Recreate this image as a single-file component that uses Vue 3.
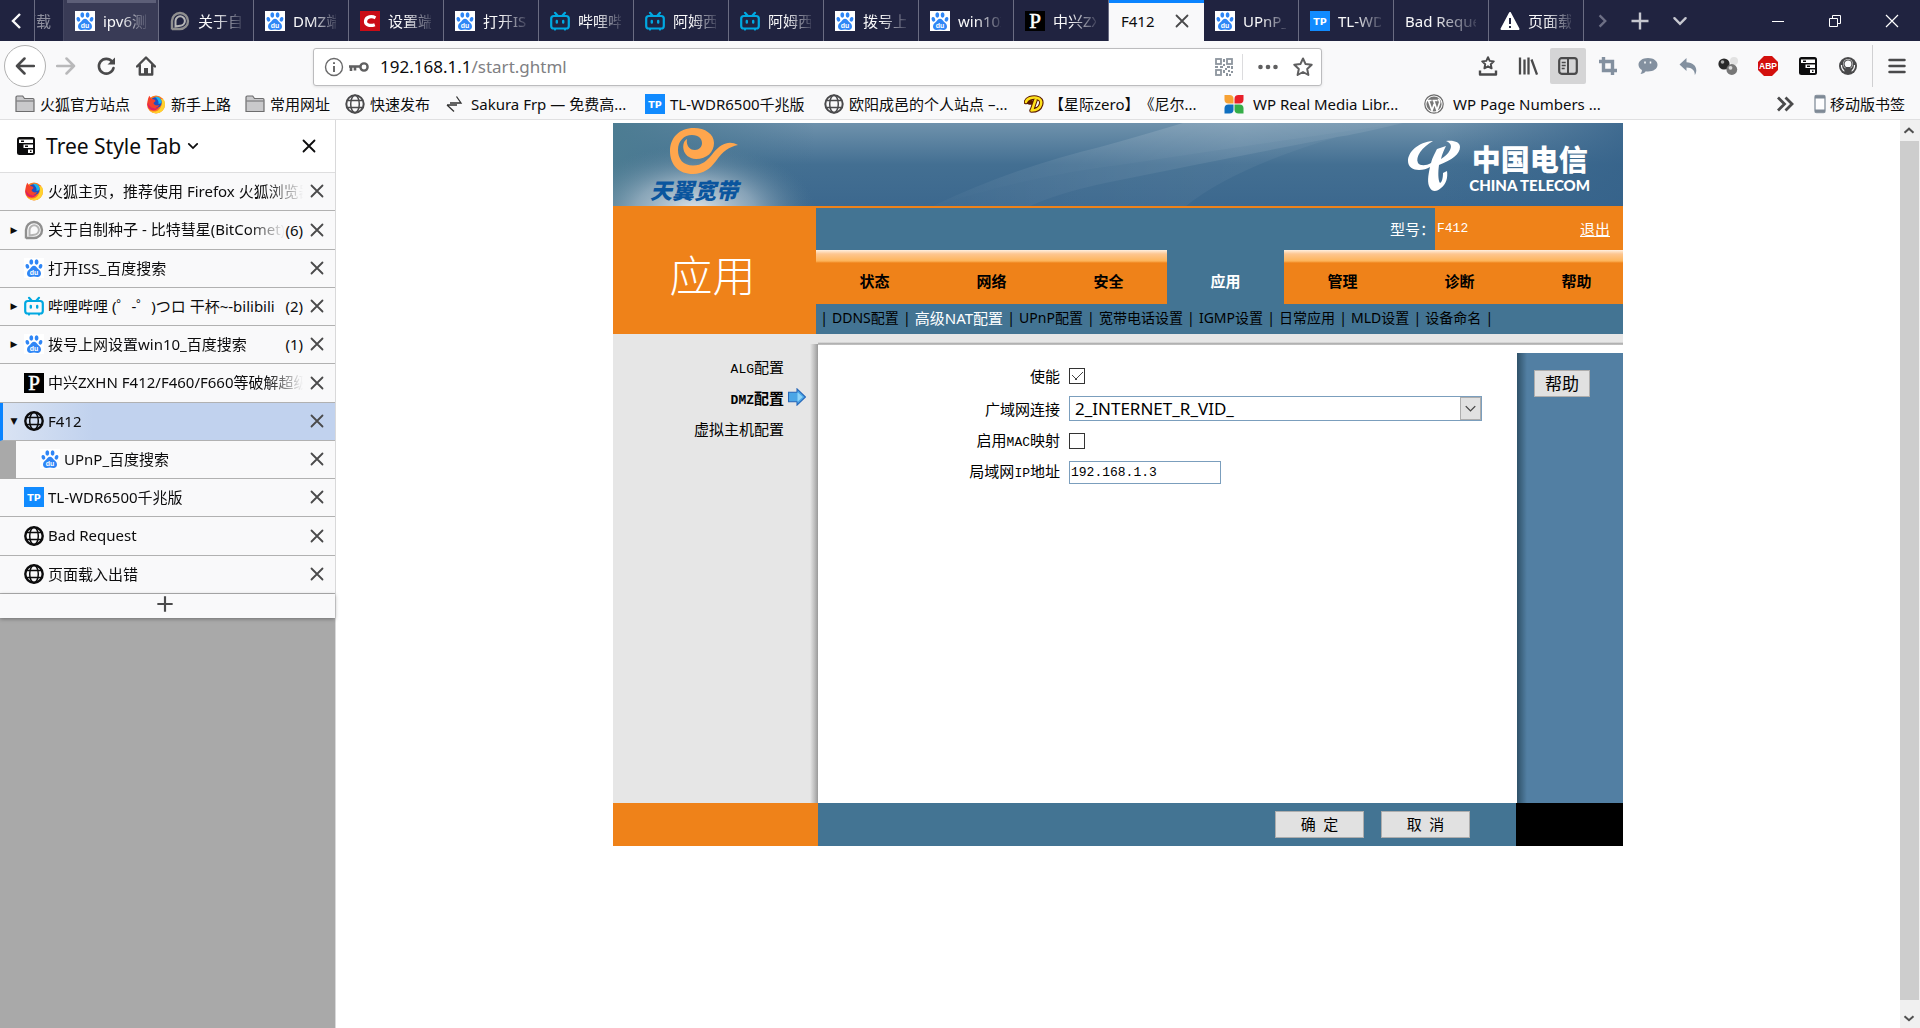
<script setup>
import { ref } from 'vue'

const tabs = [
  { icon: 'baidu', label: 'ipv6测试', hover: true },
  { icon: 'comet', label: '关于自制' },
  { icon: 'baidu', label: 'DMZ端口' },
  { icon: 'csdn', label: '设置端口' },
  { icon: 'baidu', label: '打开ISS' },
  { icon: 'bili', label: '哔哩哔哩' },
  { icon: 'bili', label: '阿姆西特' },
  { icon: 'bili', label: '阿姆西特' },
  { icon: 'baidu', label: '拨号上网' },
  { icon: 'baidu', label: 'win10端' },
  { icon: 'pblog', label: '中兴ZXHN' },
  { label: 'F412', active: true },
  { icon: 'baidu', label: 'UPnP_百' },
  { icon: 'tplink', label: 'TL-WDR' },
  { label: 'Bad Request' },
  { icon: 'warn', label: '页面载入' },
]

const bookmarks = [
  { icon: 'folder', label: '火狐官方站点', width: 131 },
  { icon: 'firefox', label: '新手上路', width: 99 },
  { icon: 'folder', label: '常用网址', width: 100 },
  { icon: 'globe', label: '快速发布', width: 101 },
  { icon: 'sakura', label: 'Sakura Frp — 免费高...', width: 199 },
  { icon: 'tplink', label: 'TL-WDR6500千兆版', width: 179 },
  { icon: 'globe', label: '欧阳成邑的个人站点 –...', width: 200 },
  { icon: 'dee', label: '【星际zero】《尼尔...', width: 200 },
  { icon: 'petals', label: 'WP Real Media Libr...', width: 200, wide: true },
  { icon: 'wp', label: 'WP Page Numbers ...', width: 200, wide: true },
]

const tools = [
  { icon: 'saved', name: '书签收藏' },
  { icon: 'library', name: '我的足迹' },
  { icon: 'sidebar', name: '侧栏', on: true },
  { icon: 'crop', name: '截图' },
  { icon: 'chat', name: '对话' },
  { icon: 'undo', name: '撤销关闭' },
  { icon: 'balls', name: '扩展' },
  { icon: 'abp', name: 'Adblock Plus' },
  { icon: 'tst', name: 'Tree Style Tab' },
  { icon: 'account', name: '账户' },
]

const tree = [
  { icon: 'firefox', label: '火狐主页，推荐使用 Firefox 火狐浏览器' },
  { icon: 'comet', label: '关于自制种子 - 比特彗星(BitComet)', count: 6, twisty: '▶' },
  { icon: 'baidu', label: '打开ISS_百度搜索' },
  { icon: 'bili', label: '哔哩哔哩 (゜-゜)つロ 干杯~-bilibili', count: 2, twisty: '▶', full: true },
  { icon: 'baidu', label: '拨号上网设置win10_百度搜索', count: 1, twisty: '▶' },
  { icon: 'pblog', label: '中兴ZXHN F412/F460/F660等破解超级' },
  { icon: 'globedark', label: 'F412', twisty: '▼', active: true },
  { icon: 'baidu', label: 'UPnP_百度搜索', child: true },
  { icon: 'tplink', label: 'TL-WDR6500千兆版' },
  { icon: 'globedark', label: 'Bad Request' },
  { icon: 'globedark', label: '页面载入出错' },
]

const menu = ['状态', '网络', '安全', '应用', '管理', '诊断', '帮助']
const submenu = ['DDNS配置', '高级NAT配置', 'UPnP配置', '宽带电话设置', 'IGMP设置', '日常应用', 'MLD设置', '设备命名']

const enabled = ref(true)
const macMap = ref(false)
const wan = ref('2_INTERNET_R_VID_')
const lanIp = ref('192.168.1.3')
</script>

<template>
  <div class="browser">
    <svg class="sprite" aria-hidden="true">
      <symbol id="baidu" viewBox="0 0 20 20">
        <rect width="20" height="20" fill="#fff" />
        <g fill="#2f86f6">
          <ellipse cx="7.3" cy="4" rx="1.9" ry="2.7" />
          <ellipse cx="12.6" cy="4" rx="1.9" ry="2.7" />
          <ellipse cx="3.4" cy="8.3" rx="1.8" ry="2.4" transform="rotate(-20 3.4 8.3)" />
          <ellipse cx="16.5" cy="8.3" rx="1.8" ry="2.4" transform="rotate(20 16.5 8.3)" />
          <path d="M10 7.8c2 0 2.600 1.600 3.700 2.800 1.300 1.400 3.300 2.300 3.300 4.800 0 2.200-1.500 3.500-3.400 3.500-1.300 0-2.300-.4-3.600-.4s-2.300.4-3.600.4C4.500 18.900 3 17.600 3 15.400c0-2.500 2-3.400 3.300-4.800C7.400 9.400 8 7.800 10 7.800z" />
        </g>
        <text x="10" y="17.300" font-size="7" font-weight="700" font-family="Liberation Sans, sans-serif" text-anchor="middle" fill="#fff">du</text>
      </symbol>
      <symbol id="comet" viewBox="0 0 20 20">
        <path d="M2 18.500V10a8 8 0 1 1 8 8H2z" fill="none" stroke="#8f8f8f" stroke-width="2.400" />
        <path d="M5.500 15.500V10a4.700 4.700 0 1 1 4.600 4.700L5.500 15.500z" fill="none" stroke="#b5b5b5" stroke-width="2" />
      </symbol>
      <symbol id="csdn" viewBox="0 0 20 20">
        <rect width="20" height="20" fill="#ca0c16" />
        <path d="M15.500 6.800C12 5 6.200 5.200 5.500 10c-.4 4.600 5.200 5.200 9.300 3.700" fill="none" stroke="#fff" stroke-width="3.200" />
      </symbol>
      <symbol id="bili" viewBox="0 0 20 20">
        <g fill="none" stroke="#00a8e1" stroke-width="2.200" stroke-linecap="round">
          <rect x="1.200" y="5" width="17.600" height="12.500" rx="2.600" />
          <path d="M5 1.800 7.500 4.600M15 1.800 12.500 4.600M5 18.200v.4M15 18.200v.4" />
          <path d="M6.800 10v1.600M13.200 10v1.600" stroke-width="2.400" />
        </g>
      </symbol>
      <symbol id="pblog" viewBox="0 0 20 20">
        <rect width="20" height="20" fill="#000" />
        <text x="10" y="17" font-size="21" font-family="Liberation Serif, serif" text-anchor="middle" fill="#fff" stroke="#fff" stroke-width=".5">P</text>
      </symbol>
      <symbol id="tplink" viewBox="0 0 20 20">
        <rect width="20" height="20" fill="#118bff" />
        <text x="10" y="13.500" font-size="9.500" font-weight="700" font-family="DejaVu Sans, sans-serif" text-anchor="middle" fill="#fff">TP</text>
      </symbol>
      <symbol id="warn" viewBox="0 0 20 20">
        <path d="M10 2 18.500 18h-17z" fill="#fff" stroke="#fff" stroke-width="2" stroke-linejoin="round" />
        <path d="M10 7v6M10 15v2" stroke="#202340" stroke-width="2" />
      </symbol>
      <symbol id="folder" viewBox="0 0 20 20">
        <path d="M1 17.500V3.500C1 2.700 1.500 2 2.300 2h5.400L9.500 4.500h8.300c.7 0 1.200.5 1.200 1.200v11.800z" fill="#c9c9cb" stroke="#6d6d6e" stroke-width="1.200" />
        <path d="M1.500 7h17" stroke="#6d6d6e" />
      </symbol>
      <symbol id="firefox" viewBox="0 0 20 20">
        <circle cx="10" cy="10.500" r="9" fill="#ff7a1a" />
        <path d="M18 6c2 4 1 9.500-3 12-4 2.300-9 1.500-12-2 3 2 7 2 9.500 0S17 10 15 5c1.200.2 2.200.4 3 1z" fill="#ffd22e" />
        <circle cx="10" cy="8.500" r="5.600" fill="#1f4fc0" />
        <path d="M9 3c4-1 7 2 6.500 6l-3 1C13 7 11.500 5 9 3z" fill="#16b5ee" />
        <path d="M2 5 3.200 1.800 5.600 5c2-.4 3.400.6 4 2L7.500 9c.5 2 3 3 5.500 2-1 4-8 4.500-10.500 0C1.500 9 1.500 7 2 5z" fill="#f5422c" />
        <path d="M2 8c.5 5 6 8 11 5-2 5-11 5-11.700-3z" fill="#e0205c" />
      </symbol>
      <symbol id="globe" viewBox="0 0 20 20">
        <g fill="none" stroke="#4a4a4c" stroke-width="1.500"><circle cx="10" cy="10" r="8.700" stroke-width="2" /><ellipse cx="10" cy="10" rx="4.300" ry="8.700" /><path d="M2.500 6.500h15M2.500 13.500h15" /></g>
      </symbol>
      <symbol id="globedark" viewBox="0 0 20 20">
        <g fill="none" stroke="#0c0c0d" stroke-width="1.500"><circle cx="10" cy="10" r="8.700" stroke-width="2.400" /><ellipse cx="10" cy="10" rx="4.300" ry="8.700" /><path d="M2.500 6.500h15M2.500 13.500h15" /></g>
      </symbol>
      <symbol id="sakura" viewBox="0 0 20 20">
        <path d="M10.500 2.500 15 9H4M1 11h10M1 11 8 17.500" fill="none" stroke="#333" stroke-width="1.300" />
      </symbol>
      <symbol id="dee" viewBox="0 0 20 20">
        <g fill="none" stroke-linecap="round" stroke-linejoin="round">
          <path d="M2 8c1-3.500 6-5 10.500-4.300 4 .7 5.500 3.300 4.500 6.800-1 3.500-4.500 6-9.500 6M11.500 6 8 16M5.500 8.500h5" stroke="#5a1a00" stroke-width="4.600" />
          <path d="M2 8c1-3.500 6-5 10.500-4.300 4 .7 5.500 3.300 4.500 6.800-1 3.500-4.500 6-9.500 6M11.500 6 8 16" stroke="#ffe21a" stroke-width="2.500" />
        </g>
      </symbol>
      <symbol id="petals" viewBox="0 0 20 20">
        <path d="M.5 1h5A4 4 0 0 1 9.500 5v4.500h-5A4 4 0 0 1 .5 5.500z" fill="#f7a234" />
        <path d="M19.500 1h-5a4 4 0 0 0-4 4v4.500h5a4 4 0 0 0 4-4z" fill="#e8202a" />
        <path d="M.5 19.500h5a4 4 0 0 0 4-4v-5h-5a4 4 0 0 0-4 4z" fill="#0f6fc0" />
        <path d="M19.500 19.500h-5a4 4 0 0 1-4-4v-5h5a4 4 0 0 1 4 4z" fill="#35ae48" />
      </symbol>
      <symbol id="wp" viewBox="0 0 20 20">
        <circle cx="10" cy="10" r="9.200" fill="#fff" stroke="#6b6b6b" stroke-width="1.200" />
        <circle cx="10" cy="10" r="7.600" fill="#777" />
        <path d="M2.600 6.500h5M8.500 6.500h5M4.500 6.500l3.500 10 2.200-6.500M9.700 6.500 13 16.500l2.600-7.800c.4-1.700-1.100-2.700-1-4" fill="none" stroke="#fff" stroke-width="1.700" />
      </symbol>
      <symbol id="back" viewBox="0 0 20 20"><path d="M19 10H2M9.500 2.500 2 10l7.500 7.500" fill="none" stroke="#4a4a4b" stroke-width="2.500" stroke-linecap="round" stroke-linejoin="round" /></symbol>
      <symbol id="forward" viewBox="0 0 20 20"><path d="M1 10h17M10.500 2.500 18 10l-7.500 7.500" fill="none" stroke="#b9b9ba" stroke-width="2.500" stroke-linecap="round" stroke-linejoin="round" /></symbol>
      <symbol id="reload" viewBox="0 0 20 20"><path d="M16 5.500A7.400 7.400 0 1 0 17.500 12" fill="none" stroke="#4a4a4b" stroke-width="2.600" stroke-linecap="round" /><path d="M19 1.500V8.600H11.500z" fill="#4a4a4b" /></symbol>
      <symbol id="home" viewBox="0 0 20 20"><path d="M1 10.500 10 1.500l9 9M3.800 9v9.500h12.400V9" fill="none" stroke="#4a4a4b" stroke-width="2.400" stroke-linecap="round" stroke-linejoin="round" /><path d="M8 18v-6h4v6z" fill="#4a4a4b" /></symbol>
      <symbol id="info" viewBox="0 0 20 20"><circle cx="10" cy="10" r="8.500" fill="none" stroke="#6a6a6b" stroke-width="1.400" /><path d="M10 9v6M10 5.200v1.900" stroke="#6a6a6b" stroke-width="2" /></symbol>
      <symbol id="key" viewBox="0 0 20 20"><circle cx="15" cy="10" r="3.600" fill="none" stroke="#5f5f60" stroke-width="2.400" /><path d="M0 9.500h11M2 10v4M6 10v3.500" stroke="#5f5f60" stroke-width="2.600" /></symbol>
      <symbol id="qr" viewBox="0 0 20 20">
        <g fill="none" stroke="#8d959e" stroke-width="1.800"><rect x="2" y="2" width="5" height="5" /><rect x="13" y="2" width="5" height="5" /><rect x="2" y="13" width="5" height="5" /></g>
        <path d="M9 2h2v3H9zM9 7h2v2H9zM1 9h3v2H1zM6 9h3v2H6zM11 11h2v2h-2zM9 13h2v3H9zM13 9h3v2h-3zM17 9h2v3h-2zM14 13h2v2h-2zM17 14h2v2h-2zM12 16h2v3h-2zM15 17h2v2h-2z" fill="#8d959e" />
      </symbol>
      <symbol id="dots" viewBox="0 0 20 20"><g fill="#5f5f60"><circle cx="2.500" cy="10" r="2.300" /><circle cx="10" cy="10" r="2.300" /><circle cx="17.500" cy="10" r="2.300" /></g></symbol>
      <symbol id="star" viewBox="0 0 20 20"><path d="M10 1.500l2.600 5.600 6.100.7-4.500 4.200 1.200 6L10 15l-5.400 3 1.200-6L1.300 7.800l6.100-.7z" fill="none" stroke="#5f5f60" stroke-width="2" stroke-linejoin="round" /></symbol>
      <symbol id="saved" viewBox="0 0 20 20"><path d="M10 1.200l1.700 3.700 4.100.5-3 2.800.8 4.100L10 10.300l-3.600 2 .8-4.100-3-2.800 4.100-.5z" fill="none" stroke="#4a4a4b" stroke-width="1.900" stroke-linejoin="round" /><path d="M2 14.500v4h16v-4" fill="none" stroke="#4a4a4b" stroke-width="2.400" stroke-linejoin="round" /></symbol>
      <symbol id="library" viewBox="0 0 20 20"><path d="M2 1.500v17M6.500 3.500v15M10.500 1.500v17M13.500 3.500 19 18.500" fill="none" stroke="#4a4a4b" stroke-width="2.300" /></symbol>
      <symbol id="sidebar" viewBox="0 0 20 20"><rect x="1.200" y="2.200" width="17.600" height="15.600" rx="2.500" fill="none" stroke="#4a4a4b" stroke-width="2.200" /><path d="M10 2v16" stroke="#4a4a4b" stroke-width="2" /><path d="M3.700 6.500h4M3.700 9.500h4M3.700 12.500h3" stroke="#4a4a4b" stroke-width="1.300" /></symbol>
      <symbol id="crop" viewBox="0 0 20 20"><path d="M5.500 1v13.500H19M1 5.500h13.500V19" fill="none" stroke="#83909f" stroke-width="3.400" /></symbol>
      <symbol id="chat" viewBox="0 0 20 20"><path d="M10 2c5.500 0 9.500 2.800 9.500 6.800S15.500 15.500 10 15.500c-.8 0-1.500 0-2.200-.2C6.500 17 4.500 18 2.500 18c1-1.200 1.500-2.500 1.400-4C1.800 12.700.5 11 .5 8.800.5 4.800 4.500 2 10 2z" fill="#83909f" /><path d="M7 5.500v2M12.500 5.500v2" stroke="#fff" stroke-width="1.500" /></symbol>
      <symbol id="undo" viewBox="0 0 20 20"><path d="M1.500 8.500 8.500 2v4.200c6 .3 9.800 3.500 9.800 8 0 1.800-.5 3.300-1.500 4.800.2-4.500-2.600-7.300-8.300-7.500V15z" fill="#83909f" /></symbol>
      <symbol id="balls" viewBox="0 0 20 20"><circle cx="16" cy="5" r="4" fill="#e2e2e2" /><circle cx="6" cy="8" r="5.600" fill="#2a2a2a" /><circle cx="4.500" cy="6" r="1.800" fill="#aaa" /><circle cx="13.800" cy="13.500" r="5.400" fill="#777" /><circle cx="12.500" cy="11.800" r="1.900" fill="#ddd" /></symbol>
      <symbol id="abp" viewBox="0 0 20 20"><path d="M6 0h8l6 6v8l-6 6H6l-6-6V6z" fill="#d3100d" /><text x="10" y="13.400" font-size="8.500" font-weight="700" font-family="Liberation Sans, sans-serif" text-anchor="middle" fill="#fff">ABP</text></symbol>
      <symbol id="tst" viewBox="0 0 20 20"><rect x="1" y="1" width="18" height="18" rx="2.500" fill="#0c0c0d" /><path d="M3 3.500h14v3.500H3zM7.500 8.500H17V12H7.500zM12 13.500h5V17h-5z" fill="#fff" /><path d="M5 5.300h3M9 10.300h3M14 15.300h1.500" stroke="#0c0c0d" stroke-width="1.400" /></symbol>
      <symbol id="account" viewBox="0 0 20 20"><circle cx="10" cy="10" r="9" fill="#4a4a4b" /><circle cx="10" cy="8" r="5" fill="#f9f9fa" /><path d="M3.500 9a7 7 0 0 0 3.500 6.500" fill="none" stroke="#f9f9fa" stroke-width="1.200" /><path d="M16.500 9a7 7 0 0 1-3.500 6.500" fill="none" stroke="#f9f9fa" stroke-width="1.200" /><path d="M8 11h4v2.500l2.500 1.500-4.500 3-4.500-3L8 13.500z" fill="#4a4a4b" /><circle cx="10" cy="8" r="4" fill="none" stroke="#4a4a4b" stroke-width="1.200" /></symbol>
      <symbol id="burger" viewBox="0 0 20 20"><path d="M2.500 4h15M2.500 10h15M2.500 16h15" stroke="#4a4a4b" stroke-width="2.500" stroke-linecap="round" /></symbol>
      <symbol id="more" viewBox="0 0 20 20"><path d="M3 3.500 9.500 10 3 16.500M10.500 3.500 17 10l-6.500 6.500" fill="none" stroke="#4a4a4b" stroke-width="2.800" /></symbol>
      <symbol id="phone" viewBox="0 0 20 20"><rect x="5" y="1.500" width="10" height="17" rx="1.500" fill="#fdfdfe" stroke="#9aa3ad" stroke-width="1.600" /><path d="M5 3h10M5 17h10" stroke="#7f8a96" stroke-width="3" /></symbol>
      <symbol id="close" viewBox="0 0 20 20"><path d="M4.500 4.500l11 11M15.500 4.500l-11 11" fill="none" stroke="currentColor" stroke-width="1.800" stroke-linecap="round" /></symbol>
      <symbol id="left" viewBox="0 0 20 20"><path d="M13 3 6 10l7 7" fill="none" stroke="currentColor" stroke-width="2.400" /></symbol>
      <symbol id="right" viewBox="0 0 20 20"><path d="M7 3l7 7-7 7" fill="none" stroke="currentColor" stroke-width="3" /></symbol>
      <symbol id="down" viewBox="0 0 20 20"><path d="M3 6.500l7 7 7-7" fill="none" stroke="currentColor" stroke-width="3" stroke-linecap="round" /></symbol>
      <symbol id="plus" viewBox="0 0 20 20"><path d="M10 1.500v17M1.500 10h17" stroke="currentColor" stroke-width="2.400" /></symbol>
      <symbol id="minimize" viewBox="0 0 20 20"><path d="M4 10.500h12" stroke="#fff" stroke-width="1" /></symbol>
      <symbol id="restore" viewBox="0 0 20 20"><path d="M4.500 7.500h8v8h-8zM7.500 7.500v-3h8v8h-3" fill="none" stroke="#fff" stroke-width="1" /></symbol>
      <symbol id="exit" viewBox="0 0 20 20"><path d="M4 4l12 12M16 4 4 16" stroke="#fff" stroke-width="1.200" /></symbol>
    </svg>

    <header class="chrome">
      <div class="tabbar">
        <button class="scroll" aria-label="向左滚动"><svg class="ic"><use href="#left" /></svg></button>
        <button class="tab cut"><span class="tab-text">面载</span></button>
        <button v-for="(t, i) in tabs" :key="i" class="tab" :class="{ active: t.active, hover: t.hover }">
          <svg v-if="t.icon" class="ic"><use :href="'#' + t.icon" /></svg>
          <span class="tab-text">{{ t.label }}</span>
          <svg v-if="t.active" class="ic"><use href="#close" /></svg>
        </button>
        <button class="strip-btn dim" aria-label="向右滚动"><svg class="ic small"><use href="#right" /></svg></button>
        <button class="strip-btn" aria-label="新建标签页"><svg class="ic"><use href="#plus" /></svg></button>
        <button class="strip-btn" aria-label="列出标签页"><svg class="ic small"><use href="#down" /></svg></button>
        <div class="window">
          <button aria-label="最小化"><svg class="ic"><use href="#minimize" /></svg></button>
          <button aria-label="还原"><svg class="ic"><use href="#restore" /></svg></button>
          <button aria-label="关闭"><svg class="ic"><use href="#exit" /></svg></button>
        </div>
      </div>

      <div class="navbar">
        <div class="nav-left">
          <button class="round" aria-label="后退"><svg class="ic"><use href="#back" /></svg></button>
          <button aria-label="前进"><svg class="ic"><use href="#forward" /></svg></button>
          <button aria-label="刷新"><svg class="ic"><use href="#reload" /></svg></button>
          <button aria-label="主页"><svg class="ic"><use href="#home" /></svg></button>
        </div>
        <div class="urlbar">
          <svg class="ic"><use href="#info" /></svg>
          <svg class="ic key"><use href="#key" /></svg>
          <div class="url">192.168.1.1<span>/start.ghtml</span></div>
          <svg class="ic"><use href="#qr" /></svg>
          <i class="rule"></i>
          <svg class="ic"><use href="#dots" /></svg>
          <svg class="ic star"><use href="#star" /></svg>
        </div>
        <div class="tools">
          <button v-for="t in tools" :key="t.icon" :class="{ on: t.on }" :aria-label="t.name"><svg class="ic"><use :href="'#' + t.icon" /></svg></button>
        </div>
        <button class="burger" aria-label="菜单"><svg class="ic"><use href="#burger" /></svg></button>
      </div>

      <nav class="bookmarks">
        <a v-for="b in bookmarks" :key="b.label" href="#" :class="{ wide: b.wide }" :style="{ width: b.width + 'px' }">
          <svg class="ic"><use :href="'#' + b.icon" /></svg><span>{{ b.label }}</span>
        </a>
        <button class="overflow" aria-label="更多书签"><svg class="ic"><use href="#more" /></svg></button>
        <a href="#" class="mobile"><svg class="ic"><use href="#phone" /></svg><span>移动版书签</span></a>
      </nav>
    </header>

    <div class="body">
      <aside class="sidebar">
        <div class="side-head">
          <svg class="ic"><use href="#tst" /></svg>
          <h2>Tree Style Tab</h2>
          <svg class="ic tiny"><use href="#down" /></svg>
          <button aria-label="关闭侧栏"><svg class="ic"><use href="#close" /></svg></button>
        </div>
        <ul class="tree">
          <li v-for="t in tree" :key="t.label" :class="{ active: t.active, child: t.child }">
            <div class="row">
              <span class="twisty">{{ t.twisty }}</span>
              <svg class="ic"><use :href="'#' + t.icon" /></svg>
              <span class="row-text" :class="{ full: t.full }">{{ t.label }}</span>
              <span v-if="t.count" class="count">({{ t.count }})</span>
              <button aria-label="关闭标签页"><svg class="ic"><use href="#close" /></svg></button>
            </div>
          </li>
        </ul>
        <button class="add" aria-label="新建标签页"><svg class="ic"><use href="#plus" /></svg></button>
      </aside>

      <main class="view">
        <div class="router">
          <div class="banner">
            <svg class="banner-bg" viewBox="0 0 1010 83" preserveAspectRatio="none" aria-hidden="true">
              <defs>
                <linearGradient id="bg" x1="0" y1="0" x2="0" y2="1">
                  <stop offset="0" stop-color="#6f92ac" /><stop offset=".5" stop-color="#436f92" /><stop offset="1" stop-color="#3c688e" />
                </linearGradient>
                <linearGradient id="edge" x1="0" y1="0" x2="1" y2="0">
                  <stop offset="0" stop-color="#4c7c92" /><stop offset=".2" stop-color="#41708f" stop-opacity="0" /><stop offset=".82" stop-color="#35628a" stop-opacity="0" /><stop offset="1" stop-color="#35628a" stop-opacity=".8" />
                </linearGradient>
                <radialGradient id="glow" gradientUnits="userSpaceOnUse" cx="0" cy="0" r="1" gradientTransform="translate(82 88) scale(120 66)">
                  <stop offset="0" stop-color="#e2e8ed" /><stop offset=".5" stop-color="#a3b8c8" stop-opacity=".7" /><stop offset="1" stop-color="#5a8099" stop-opacity="0" />
                </radialGradient>
                <linearGradient id="ray" gradientUnits="userSpaceOnUse" x1="320" y1="83" x2="760" y2="0">
                  <stop offset="0" stop-color="#fff" stop-opacity=".02" /><stop offset=".7" stop-color="#fff" stop-opacity=".16" /><stop offset="1" stop-color="#fff" stop-opacity=".1" />
                </linearGradient>
              </defs>
              <rect width="1010" height="83" fill="url(#bg)" />
              <rect width="1010" height="83" fill="url(#edge)" />
              <path d="M320 83Q420 52 507 42 640 22 790 0H570Q520 15 487 24 400 45 320 83z" fill="url(#ray)" />
              <path d="M320 83Q420 52 507 42 640 22 790 0 740 12 724 14 600 38 507 57 450 68 417 83z" fill="url(#ray)" opacity=".8" />
              <path d="M573 83Q620 45 724 14 600 38 507 57 450 68 417 83z" fill="url(#ray)" opacity=".3" />
              <rect width="230" height="83" fill="url(#glow)" />
            </svg>
            <div class="brand">
              <svg class="swirl" viewBox="0 0 70 48" aria-hidden="true">
                <path d="M69 18C60 13 52 17 45 25 38 34 33 38.500 24 38.500 14 38.500 9 32 9 23 9 14 15 8 23 8c7 0 10 4 10 8s-3 7-7 7c-6 0-9-5-8-11-6 3-6 19 9 20 11 0 18-7 18-16S36 1 25 1C10 1 1 11 1 24c0 14 9 23 23 23 10 0 17-5 23-13 7-10 13-14 22-16z" fill="#ffa64d" />
              </svg>
              <strong>天翼宽带</strong>
            </div>
            <div class="telecom">
              <svg viewBox="0 0 52 52" aria-hidden="true">
                <path d="M25 1C10 2 0 12 0 21c0 6 5 9 11 9 4 0 8-1 11-3-2 9-3 16 0 21 2 4 7 4 11 0 5-4 7-10 6-17l-4 2c0 5-1 9-3 10-2-3-2-11-1-18C44 20 52 14 52 7c0-5-6-7-14-6 5 2 6 5 4 9-2 4-5 6-9 9 1-5 3-9 5-13l-9 3c-2 4-5 9-6 14-5 3-11 3-13 0-3-6 4-16 15-22z" fill="#fff" />
              </svg>
              <div class="telecom-text"><strong>中国电信</strong><span>CHINA TELECOM</span></div>
            </div>
          </div>

          <div class="top">
            <h1>应用</h1>
            <div class="top-right">
              <div class="info">
                <div class="model">型号：</div>
                <div class="model-side"><span class="mono">F412</span><a href="#">退出</a></div>
              </div>
              <nav class="menu"><a v-for="m in menu" :key="m" href="#" :class="{ current: m === '应用' }">{{ m }}</a></nav>
              <nav class="submenu">
                <i>|</i><template v-for="s in submenu" :key="s"><a href="#" :class="{ current: s === '高级NAT配置' }">{{ s }}</a><i>|</i></template>
              </nav>
            </div>
          </div>

          <div class="middle">
            <nav class="pages">
              <a href="#"><span class="mono">ALG</span>配置</a>
              <a href="#" class="current"><span class="mono">DMZ</span>配置
                <svg viewBox="0 0 17 17" aria-hidden="true"><path d="M.5 4h8V.8L16.500 8.500l-8 7.700V13h-8z" fill="#4ba6e6" stroke="#2465b8" /><path d="M9 4v9l5-4.500z" fill="#8fd3f7" /></svg>
              </a>
              <a href="#">虚拟主机配置</a>
            </nav>
            <div class="content">
              <div class="strip"></div>
              <div class="columns">
                <form class="form" @submit.prevent>
                  <label for="enabled">使能</label>
                  <input id="enabled" v-model="enabled" type="checkbox" />
                  <label for="wan">广域网连接</label>
                  <div class="select">
                    <select id="wan" v-model="wan"><option>2_INTERNET_R_VID_</option></select>
                    <span class="drop"><svg viewBox="0 0 20 20"><path d="M5 7.500l5 5 5-5" fill="none" stroke="#444" stroke-width="1.400" /></svg></span>
                  </div>
                  <label for="mac">启用<span class="mono">MAC</span>映射</label>
                  <input id="mac" v-model="macMap" type="checkbox" />
                  <label for="ip">局域网<span class="mono">IP</span>地址</label>
                  <input id="ip" v-model="lanIp" type="text" class="mono" />
                </form>
                <div class="help"><button>帮助</button></div>
              </div>
            </div>
          </div>

          <div class="foot">
            <div class="foot-left"></div>
            <div class="foot-main"><button>确&ensp;定</button><button>取&ensp;消</button></div>
            <div class="foot-right"></div>
          </div>
        </div>
      </main>

      <div class="scrollbar">
        <svg viewBox="0 0 20 20"><path d="M5 12.500 10 8l5 4.500" fill="none" stroke="#505050" stroke-width="2.200" /></svg>
        <div class="thumb"></div>
        <svg viewBox="0 0 20 20" class="low"><path d="M5 8l5 4.500L15 8" fill="none" stroke="#505050" stroke-width="2.200" /></svg>
      </div>
    </div>
  </div>
</template>

<style>
body { margin: 0; }
</style>

<style scoped>
* { box-sizing: border-box; }
.browser {
  min-height: 100vh;
  display: flex;
  flex-direction: column;
  font: 15px/20px "Noto Sans", "Noto Sans CJK SC", sans-serif;
  text-spacing-trim: space-all;
  color: #0c0c0d;
  background: #fff;
}
button { font: inherit; color: inherit; background: none; border: 0; padding: 0; margin: 0; }
a { color: inherit; text-decoration: none; }
.sprite { display: none; }
.ic { width: 20px; height: 20px; flex: none; display: block; }
.mono { font-family: "Liberation Mono", monospace; font-size: 13px; line-height: 16px; }

.tabbar { height: 41px; display: flex; background: #202340; color: #f9f9fa; overflow: hidden; }
.scroll { width: 35px; flex: none; display: flex; align-items: center; justify-content: center; border-right: 1px solid #6a6c82; }
.tab { width: 95px; flex: none; display: flex; align-items: center; gap: 8px; padding: 0 12px 0 11px; border-right: 1px solid #6a6c82; text-align: left; }
.tab-text { flex: 1; min-width: 0; overflow: hidden; white-space: nowrap; mask-image: linear-gradient(to right, #000 40%, transparent 110%); }
.tab.cut { width: 29px; padding: 0 12px 0 0; opacity: .5; }
.tab.cut .tab-text { display: flex; justify-content: flex-end; mask-image: none; }
.tab.hover { background: linear-gradient(#5d5f78, #5d5f78) center top / 89px 3px no-repeat, #393b56; }
.tab.active { background: #f9f9fa; color: #0c0c0d; border-top: 3px solid #0a84ff; border-right: 0; padding: 0 12px 3px; }
.tab.active .ic { color: #4a4a4b; }
.tab.active .tab-text { mask-image: none; }
.strip-btn { width: 40px; flex: none; display: flex; align-items: center; justify-content: center; color: #c6c7cf; }
.strip-btn.dim { width: 36px; color: #6d6f85; }
.small { width: 16px; height: 16px; }
.window { margin-left: auto; display: flex; }
.window button { width: 57px; display: flex; align-items: center; justify-content: center; }

.navbar { height: 50px; display: flex; align-items: center; background: #f9f9fa; }
.nav-left { display: flex; width: 313px; flex: none; padding-left: 4px; align-items: center; }
.nav-left button { width: 40px; height: 42px; display: flex; align-items: center; justify-content: center; }
.nav-left .round { width: 42px; border: 1px solid #b1b1b1; border-radius: 50%; background: #fff; }
.urlbar { flex: 0 1 1009px; min-width: 0; height: 38px; margin-top: 2px; display: flex; align-items: center; padding: 0 8px 0 10px; border: 1px solid #bcbcbe; border-radius: 3px; background: #fff; box-shadow: 0 1px 3px #0000001a; }
.urlbar .key { margin: 0 11px 0 5px; }
.url { flex: 1; min-width: 0; font-size: 17px; line-height: 24px; white-space: nowrap; overflow: hidden; }
.url span { color: #808083; }
.rule { width: 1px; height: 26px; background: #dcdcde; margin: 0 15px 0 8px; }
.urlbar .star { margin-left: 15px; }
.tools { display: flex; margin-left: auto; padding-right: 4px; }
.tools button { width: 36px; height: 36px; margin: 0 2px; border-radius: 2px; display: flex; align-items: center; justify-content: center; }
.tools .on { background: #d5d5d6; }
.burger { height: 42px; width: 48px; border-left: 1px solid #d0d0d2; display: flex; align-items: center; justify-content: center; }

.bookmarks { height: 29px; display: flex; align-items: center; padding: 0 15px 3px; background: #f9f9fa; border-bottom: 1px solid #e0e0e1; }
.bookmarks a { display: flex; align-items: center; gap: 5px; white-space: nowrap; flex: none; }
.bookmarks a.wide { gap: 9px; }
.bookmarks .overflow { margin-left: auto; margin-right: 15px; }
.bookmarks .mobile { gap: 0; }

.body { flex: 1; display: flex; }
.sidebar { width: 336px; flex: none; background: #a9a9a9; border-right: 1px solid #d9d9da; }
.side-head { height: 53px; display: flex; align-items: center; padding: 0 16px; background: #fff; border-bottom: 1px solid #dededf; }
.side-head h2 { margin: 0 6px 0 10px; font-size: 21px; line-height: 28px; font-weight: 400; }
.side-head button { margin-left: auto; }
.tiny { width: 12px; height: 12px; }
.tree { list-style: none; margin: 0; padding: 0; }
.tree li { height: 38px; }
.tree li:nth-child(4n + 2) { height: 39px; }
.row { height: 100%; display: flex; align-items: center; padding: 0 8px 1px 4px; background: #f9f9fa; border-bottom: 1px solid #b1b1b1; }
.child { padding-left: 16px; }
.active .row { padding-left: 1px; border-left: 3px solid #0a84ff; background: linear-gradient(to right, #d9e3f3, #c1d2ee 90px); }
.twisty { width: 20px; flex: none; text-align: center; font: 9px/20px "DejaVu Sans", sans-serif; }
.row-text { flex: 1; min-width: 0; margin-left: 4px; padding-bottom: 1px; overflow: hidden; white-space: nowrap; mask-image: linear-gradient(to right, #000 calc(100% - 36px), transparent); }
.row-text.full { mask-image: none; }
.count { flex: none; }
.row button { margin-left: 4px; color: #4a4a4b; }
.add { width: 100%; height: 24px; display: flex; align-items: center; justify-content: center; padding: 0 6px 4px 0; background: #f9f9fa; color: #4a4a4b; box-shadow: 0 1px 4px #00000055; }
.add .ic { width: 18px; height: 18px; }

.view { flex: 1; min-width: 0; padding-top: 3px; }
.router { max-width: 1010px; margin: 0 auto; font-family: "Noto Sans CJK SC", sans-serif; }
.banner { position: relative; height: 83px; display: flex; justify-content: space-between; overflow: hidden; }
.banner-bg { position: absolute; inset: 0; width: 100%; height: 100%; }
.brand { position: relative; width: 162px; display: flex; flex-direction: column; align-items: center; padding-top: 4px; }
.swirl { width: 70px; height: 48px; margin-left: 20px; }
.brand strong { font-size: 22px; line-height: 28px; font-weight: 900; font-style: italic; color: #0a559e; }
.telecom { position: relative; display: flex; gap: 9px; padding: 17px 33px 0 0; color: #fff; }
.telecom svg { width: 52px; height: 52px; }
.telecom-text { display: flex; flex-direction: column; align-items: center; }
.telecom-text strong { font-size: 29px; line-height: 36px; font-weight: 900; }
.telecom-text span { font: 900 15px/18px Lato, sans-serif; }

.top { display: flex; background: #ef8219; }
.top h1 { width: 203px; flex: none; margin: 0; padding: 6px 4px 0 0; display: flex; align-items: center; justify-content: center; color: #fff; font-size: 43px; line-height: 52px; font-weight: 300; }
.top-right { flex: 1; min-width: 0; padding-top: 2px; overflow: hidden; }
.info { height: 42px; display: flex; background: #437493; color: #fff; }
.model { margin-left: auto; line-height: 42px; }
.model-side { width: 188px; flex: none; display: flex; align-items: center; justify-content: space-between; padding: 0 13px 0 2px; background: #ef8219; }
.model-side a { text-decoration: underline; }
.menu { display: flex; height: 54px; background: linear-gradient(#fff0e0 0, #fdc690 4px, #fdb45a 11px, #ef8219 13px); }
.menu a { width: 117px; flex: none; padding-top: 21px; text-align: center; font-weight: 700; color: #000; }
.menu .current { background: #437493; color: #fff; }
.submenu { height: 30px; padding-bottom: 2px; display: flex; align-items: center; background: #437493; font: 14px/20px "Noto Sans", "Noto Sans CJK SC", sans-serif; color: #000; white-space: nowrap; }
.submenu i { width: 16px; flex: none; text-align: center; font-style: normal; }
.submenu .current { color: #fff; font-size: 15px; }

.middle { display: flex; }
.pages { width: 205px; flex: none; padding: 23px 34px 0 0; display: flex; flex-direction: column; gap: 11px; text-align: right; color: #000; background: linear-gradient(to right, #e6e6e6, #bbb 60%, #999) right 10px / 8px 100% no-repeat, #e6e6e6; }
.pages a { position: relative; height: 20px; }
.pages .current { font-weight: 700; }
.pages svg { position: absolute; left: calc(100% + 4px); top: 0; width: 18px; height: 18px; }
.content { flex: 1; min-width: 0; }
.strip { height: 11px; background: linear-gradient(#e6e6e6 8px, #a0a0a0 10px, #ddd 11px); }
.columns { display: flex; min-height: 458px; }
.form { flex: 1; min-width: 0; padding-top: 23px; display: grid; grid-template-columns: 242px 1fr; grid-template-rows: 16px 25px 16px 23px; align-content: start; align-items: center; gap: 12px 9px; color: #000; }
.form label { text-align: right; line-height: 16px; }
.form input { margin: 0; }
.form input[type="checkbox"] { appearance: none; width: 16px; height: 16px; border: 1px solid #333; background: #fff; }
.form input[type="checkbox"]:checked { background: linear-gradient(45deg, transparent 45%, #444 45%, #444 55%, transparent 55%) 2px 6px / 5px 5px no-repeat, linear-gradient(-45deg, transparent 45%, #444 45%, #444 55%, transparent 55%) 5px 3px / 8px 8px no-repeat, #fff; }
.form input[type="text"] { width: 152px; height: 23px; padding: 0 1px; border: 1px solid #7b9ebd; color: #000; background: #fff; }
.select { position: relative; width: 413px; max-width: 100%; height: 25px; }
.select select { appearance: none; display: block; width: 100%; height: 25px; margin: 0; padding: 0 24px 0 5px; border: 1px solid #7b9ebd; border-radius: 0; background: #fff; font: 17px/23px "Noto Sans", sans-serif; color: #000; }
.drop { position: absolute; top: 1px; right: 1px; width: 21px; height: 23px; background: #e1e1e1; border: 1px solid #adadad; pointer-events: none; }
.drop svg { display: block; width: 19px; height: 21px; }
.help { width: 106px; flex: none; margin-top: 8px; padding: 17px 0 0 17px; background: linear-gradient(to right, #2f5168, #527fa3 10px); }
.help button, .foot button { height: 27px; padding-bottom: 1px; border: 1px solid #adadad; background: #e1e1e1; color: #000; display: flex; align-items: center; justify-content: center; }
.help button { width: 56px; font-size: 17px; }
.foot { display: flex; height: 43px; }
.foot-left { width: 205px; flex: none; background: #ef8219; }
.foot-main { flex: 1; display: flex; justify-content: flex-end; align-items: center; gap: 17px; padding-right: 46px; background: #437493; }
.foot-main button { width: 89px; }
.foot-right { width: 107px; flex: none; background: #000; }

.scrollbar { width: 20px; flex: none; display: flex; flex-direction: column; background: #f0f0f0; }
.scrollbar svg { width: 18px; height: 21px; flex: none; display: block; }
.scrollbar .low { height: 28px; padding-top: 8px; }
.thumb { flex: 1; margin-right: 1px; background: #cdcdcd; }
</style>
